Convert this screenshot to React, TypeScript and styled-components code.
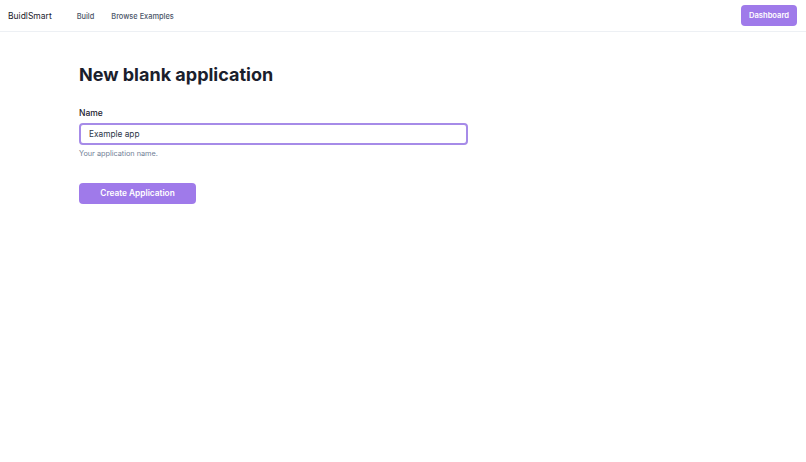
import React from 'react';
import styled, { createGlobalStyle } from 'styled-components';

const GlobalStyle = createGlobalStyle`
  html, body {
    margin: 0;
    padding: 0;
    background: #fff;
    font-family: Inter, "Noto Sans", "Liberation Sans", sans-serif;
    color: #1a202c;
  }
`;

const Header = styled.header`
  display: flex;
  align-items: center;
  height: 31px;
  padding: 0 9px 0 8px;
  border-bottom: 1px solid #edf0f4;
`;

const Brand = styled.div`
  font-size: 8.5px;
  color: #1a202c;
  margin-right: 25px;
`;

const NavLinks = styled.nav`
  display: flex;
  gap: 17px;
  flex: 1;
  padding-top: 2px;
`;

const NavLink = styled.a`
  font-size: 7.4px;
  font-weight: 500;
  color: #4a5568;
  text-decoration: none;
`;

const PurpleButton = styled.button<{ $wide?: boolean }>`
  border: none;
  border-radius: 4px;
  background: #9f7aea;
  color: #fff;
  font-family: inherit;
  font-weight: 600;
  font-size: ${p => (p.$wide ? '8.3px' : '7.6px')};
  height: 21px;
  padding: 0;
  width: ${p => (p.$wide ? '117px' : '56px')};
  cursor: pointer;
`;

const Main = styled.main`
  padding: 32px 0 0 79px;
`;

const Title = styled.h1`
  margin: 0 0 22px;
  font-size: 18px;
  font-weight: 700;
  line-height: 22px;
  color: #1a202c;
`;

const Field = styled.div`
  width: 389px;
  display: flex;
  flex-direction: column;
`;

const Label = styled.label`
  font-size: 8.5px;
  font-weight: 500;
  margin-bottom: 5px;
`;

const Input = styled.input`
  box-sizing: border-box;
  height: 22px;
  width: 100%;
  border: 2px solid #a68be8;
  border-radius: 4px;
  padding: 0 8px;
  font-family: inherit;
  font-size: 8.3px;
  color: #2d3748;
  outline: none;
`;

const Helper = styled.div`
  font-size: 7.3px;
  color: #718096;
  margin-top: 4px;
`;

const Actions = styled.div`
  margin-top: 22px;
`;

export default function App() {
  return (
    <>
      <GlobalStyle />
      <Header>
        <Brand>BuidlSmart</Brand>
        <NavLinks>
          <NavLink>Build</NavLink>
          <NavLink>Browse Examples</NavLink>
        </NavLinks>
        <PurpleButton>Dashboard</PurpleButton>
      </Header>
      <Main>
        <Title>New blank application</Title>
        <Field>
          <Label>Name</Label>
          <Input defaultValue="Example app" />
          <Helper>Your application name.</Helper>
        </Field>
        <Actions>
          <PurpleButton $wide>Create Application</PurpleButton>
        </Actions>
      </Main>
    </>
  );
}
